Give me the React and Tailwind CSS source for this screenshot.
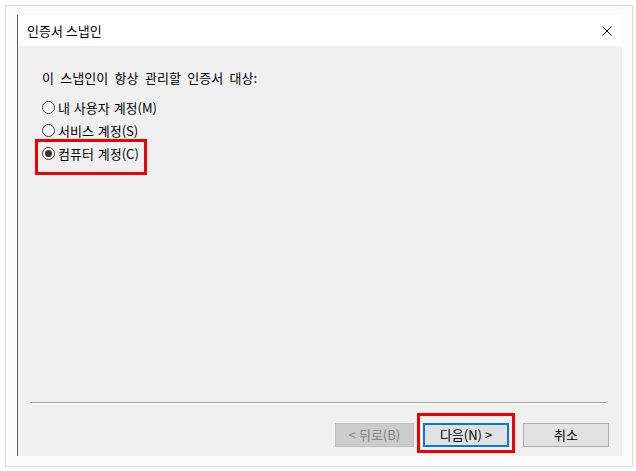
import React from 'react';

const font = { fontFamily: '"Noto Sans CJK KR", "Noto Sans", sans-serif' };

function Radio({ checked, label, marked }) {
  return (
    <div className="relative flex h-[23px] items-center gap-[3px]">
      <span className="flex h-[13px] w-[13px] items-center justify-center rounded-full border border-[#333333] bg-white">
        {checked && <span className="h-[7px] w-[7px] rounded-full bg-[#333333]" />}
      </span>
      <span className="text-[13px] leading-[16px] text-[#000000] [word-spacing:1px]">{label}</span>
      {marked && (
        <span className="absolute left-[-7px] top-[-3px] h-[36px] w-[112px] border-[3px] border-[#ee0000]" />
      )}
    </div>
  );
}

export default function App() {
  return (
    <div className="h-[471px] w-[636px] bg-white pl-[5px] pt-[5px]" style={font}>
      <div className="h-[462px] w-[628px] border border-[#dadada] bg-[#fcfcfc] pl-[11px] pt-[9px]">
        <div className="flex h-[441px] w-[605px] flex-col border-l border-[#5f5f5f]">
          {/* Title bar */}
          <div className="flex h-[31px] items-center justify-between bg-white pl-[9px] pr-[10px]">
            <span className="text-[13px] leading-[16px] text-black">인증서 스냅인</span>
            <svg width="10" height="10" viewBox="0 0 10 10">
              <path d="M0.5 0.5 L9.5 9.5 M9.5 0.5 L0.5 9.5" stroke="#000" strokeWidth="1" />
            </svg>
          </div>

          {/* Body */}
          <div className="flex flex-1 flex-col bg-[#f0f0f0]">
            <div className="pl-[24px] pt-[24px]">
              <p className="text-[13px] leading-[16px] text-black [word-spacing:3.5px]">
                이 스냅인이 항상 관리할 인증서 대상:
              </p>
              <div className="mt-[10px] flex flex-col">
                <Radio label="내 사용자 계정(M)" />
                <Radio label="서비스 계정(S)" />
                <Radio checked marked label="컴퓨터 계정(C)" />
              </div>
            </div>

            <div className="ml-[12px] mr-[15px] mt-auto h-[2px] border-t border-[#a0a0a0] border-b border-b-white" />

            <div className="flex justify-end pb-[9px] pr-[13px] pt-[19px] text-[13px]">
              <button className="h-[24px] w-[79px] border border-[#bfbfbf] bg-[#cccccc] text-[#838383]">
                &lt; 뒤로(B)
              </button>
              <div className="relative ml-[9px]">
                <button className="h-[24px] w-[86px] border-2 border-[#0078d7] bg-[#e1e1e1] text-black">
                  다음(N) &gt;
                </button>
                <span className="absolute left-[-6px] top-[-10px] h-[40px] w-[98px] border-[3px] border-[#ee0000]" />
              </div>
              <button className="ml-[14px] h-[24px] w-[86px] border border-[#adadad] bg-[#e1e1e1] text-black">
                취소
              </button>
            </div>
          </div>
        </div>
      </div>
    </div>
  );
}
